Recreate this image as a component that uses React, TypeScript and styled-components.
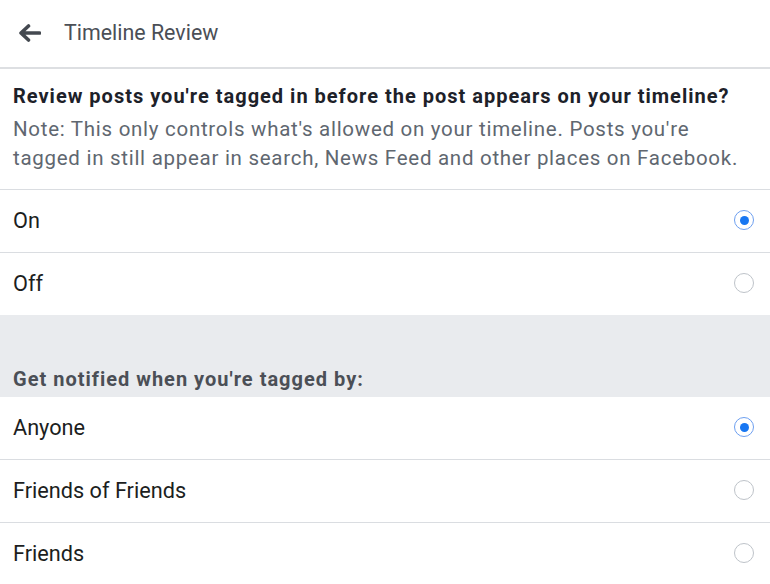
import React from "react";
import styled, { createGlobalStyle } from "styled-components";

const Global = createGlobalStyle`
  html, body { margin: 0; padding: 0; background: #ffffff; }
  body { font-family: Roboto, "Noto Sans", Arial, sans-serif; -webkit-font-smoothing: antialiased; }
  * { box-sizing: border-box; }
`;

const Page = styled.div`
  width: 770px;
  height: 584px;
  overflow: hidden;
  background: #ffffff;
  display: flex;
  flex-direction: column;
`;

const Header = styled.header`
  height: 69px;
  flex: none;
  display: flex;
  align-items: center;
  padding: 0 0 2px 18px;
  border-bottom: 2px solid #dddfe2;
  gap: 23px;
`;

const BackButton = styled.button`
  border: 0;
  background: none;
  padding: 0;
  width: 23px;
  height: 20px;
  display: flex;
  align-items: center;
  justify-content: center;
  color: #444950;
`;

const Title = styled.h1`
  margin: 0;
  font-size: 21.4px;
  font-weight: 400;
  color: #4b4f56;
`;

const Intro = styled.section`
  padding: 13px 13px 16px;
  border-bottom: 1px solid #dadde1;
`;

const Question = styled.h2`
  margin: 0 0 5px;
  font-size: 20px;
  line-height: 28px;
  letter-spacing: 1px;
  font-weight: 700;
  color: #1d2129;
  white-space: nowrap;
`;

const Note = styled.p`
  margin: 0;
  font-size: 20.5px;
  line-height: 29px;
  letter-spacing: 0.72px;
  color: #606770;
`;

const Option = styled.label<{ $last?: boolean }>`
  height: ${(p) => (p.$last ? "62px" : "63px")};
  flex: none;
  display: flex;
  align-items: center;
  justify-content: space-between;
  padding: 0 16px 2px 13px;
  border-bottom: ${(p) => (p.$last ? "none" : "1px solid #dadde1")};
  font-size: 21.7px;
  color: #1c1e21;
`;

const Radio = styled.span<{ $on?: boolean }>`
  width: 20px;
  height: 20px;
  border-radius: 50%;
  border: 1.5px solid ${(p) => (p.$on ? "#6d9ff0" : "#bec3c9")};
  display: flex;
  align-items: center;
  justify-content: center;
  &::after {
    content: "";
    width: 9px;
    height: 9px;
    border-radius: 50%;
    background: ${(p) => (p.$on ? "#1877f2" : "transparent")};
  }
`;

const SectionHead = styled.div`
  height: 82px;
  flex: none;
  background: #e9ebee;
  display: flex;
  align-items: flex-end;
  padding: 0 13px 6px;
  font-size: 20px;
  letter-spacing: 1px;
  font-weight: 700;
  color: #4b4f56;
`;

function Row({ label, on, last }: { label: string; on?: boolean; last?: boolean }) {
  return (
    <Option $last={last}>
      <span>{label}</span>
      <Radio $on={on} />
    </Option>
  );
}

export default function App() {
  return (
    <>
      <Global />
      <Page>
        <Header>
          <BackButton aria-label="Back">
            <svg width="23" height="18" viewBox="0 0 23 18">
              <path
                d="M21.5 9H3.5M10.5 2L3 9l7.5 7"
                fill="none"
                stroke="currentColor"
                strokeWidth="3.6"
                strokeLinecap="round"
                strokeLinejoin="round"
              />
            </svg>
          </BackButton>
          <Title>Timeline Review</Title>
        </Header>
        <Intro>
          <Question>Review posts you're tagged in before the post appears on your timeline?</Question>
          <Note>
            Note: This only controls what's allowed on your timeline. Posts you're tagged in still appear in search, News Feed and other places on Facebook.
          </Note>
        </Intro>
        <Row label="On" on />
        <Row label="Off" last />
        <SectionHead>Get notified when you're tagged by:</SectionHead>
        <Row label="Anyone" on />
        <Row label="Friends of Friends" />
        <Row label="Friends" last />
      </Page>
    </>
  );
}
